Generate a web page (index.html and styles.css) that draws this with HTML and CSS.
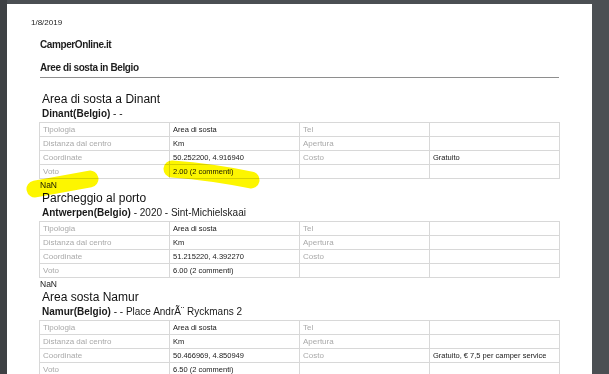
FILE: index.html
```html
<!DOCTYPE html>
<html lang="it">
<head>
<meta charset="utf-8">
<title>Aree di sosta in Belgio</title>
<link rel="stylesheet" href="styles.css">
</head>
<body>
<div class="page">
  <div class="date">1/8/2019</div>
  <div class="site">CamperOnline.it</div>
  <div class="heading">Aree di sosta in Belgio</div>

  <section class="area">
    <h2 class="area-title">Area di sosta a Dinant</h2>
    <div class="area-sub"><b>Dinant(Belgio)</b> - -</div>
    <table class="info">
      <tr><td class="lbl">Tipologia</td><td class="val">Area di sosta</td><td class="lbl">Tel</td><td class="val"></td></tr>
      <tr><td class="lbl">Distanza dal centro</td><td class="val">Km</td><td class="lbl">Apertura</td><td class="val"></td></tr>
      <tr><td class="lbl">Coordinate</td><td class="val">50.252200, 4.916940</td><td class="lbl">Costo</td><td class="val">Gratuito</td></tr>
      <tr><td class="lbl">Voto</td><td class="val">2.00 (2 commenti)</td><td class="lbl"></td><td class="val"></td></tr>
    </table>
    <div class="nan">NaN</div>
  </section>

  <section class="area">
    <h2 class="area-title">Parcheggio al porto</h2>
    <div class="area-sub"><b>Antwerpen(Belgio)</b> - 2020 - Sint-Michielskaai</div>
    <table class="info">
      <tr><td class="lbl">Tipologia</td><td class="val">Area di sosta</td><td class="lbl">Tel</td><td class="val"></td></tr>
      <tr><td class="lbl">Distanza dal centro</td><td class="val">Km</td><td class="lbl">Apertura</td><td class="val"></td></tr>
      <tr><td class="lbl">Coordinate</td><td class="val">51.215220, 4.392270</td><td class="lbl">Costo</td><td class="val"></td></tr>
      <tr><td class="lbl">Voto</td><td class="val">6.00 (2 commenti)</td><td class="lbl"></td><td class="val"></td></tr>
    </table>
    <div class="nan">NaN</div>
  </section>

  <section class="area">
    <h2 class="area-title">Area sosta Namur</h2>
    <div class="area-sub"><b>Namur(Belgio)</b> - - Place AndrÃ¨ Ryckmans 2</div>
    <table class="info">
      <tr><td class="lbl">Tipologia</td><td class="val">Area di sosta</td><td class="lbl">Tel</td><td class="val"></td></tr>
      <tr><td class="lbl">Distanza dal centro</td><td class="val">Km</td><td class="lbl">Apertura</td><td class="val"></td></tr>
      <tr><td class="lbl">Coordinate</td><td class="val">50.466969, 4.850949</td><td class="lbl">Costo</td><td class="val">Gratuito, € 7,5 per camper service</td></tr>
      <tr><td class="lbl">Voto</td><td class="val">6.50 (2 commenti)</td><td class="lbl"></td><td class="val"></td></tr>
    </table>
    <div class="nan">NaN</div>
  </section>
</div>

<svg class="marker" width="609" height="374" viewBox="0 0 609 374" aria-hidden="true">
  <path d="M35 189 Q 62 184 90 179" />
  <path d="M172 169 Q 212 172 251 180" />
</svg>
</body>
</html>
```

FILE: styles.css
```css
html, body {
  margin: 0;
  padding: 0;
  height: 100%;
  overflow: hidden;
}

body {
  background: linear-gradient(to right, #3e4144 0, #3e4144 7px, #4b4f53 7px);
  font-family: "Liberation Sans", Arial, sans-serif;
  color: #1e1e1e;
  position: relative;
}

.page {
  margin: 4px 17px 0 7px;
  min-height: 370px;
  background: #ffffff;
  box-sizing: border-box;
  padding: 14px 0 0 33px;
}

.date {
  margin-left: -9px;
  font-size: 8px;
  line-height: 10px;
  color: #222;
}

.site {
  margin-top: 10px;
  font-size: 10px;
  line-height: 13px;
  font-weight: bold;
  letter-spacing: -0.4px;
}

.heading {
  margin-top: 10px;
  width: 519px;
  font-size: 10px;
  line-height: 13px;
  font-weight: bold;
  letter-spacing: -0.4px;
  padding-bottom: 3px;
  border-bottom: 1px solid #8e8e8e;
}

.area:first-of-type {
  margin-top: 14px;
}

.area-title {
  margin: 0;
  padding-left: 2px;
  font-size: 12px;
  line-height: 15px;
  font-weight: normal;
  color: #111;
}

.area-sub {
  padding-left: 2px;
  font-size: 10px;
  line-height: 13px;
  color: #1a1a1a;
}

.area-sub b {
  font-weight: bold;
}

.info {
  margin: 2px 0 0 -1px;
  width: 521px;
  table-layout: fixed;
  border-collapse: collapse;
}

.info td {
  border: 1px solid #d8d8d8;
  padding: 0 3px;
  line-height: 13px;
  white-space: nowrap;
  overflow: hidden;
}

.info .lbl {
  font-size: 8px;
  color: #a9a9a9;
}

.info .val {
  font-size: 7.5px;
  color: #202020;
}

.nan {
  font-size: 8.5px;
  line-height: 12px;
  color: #1a1a1a;
}

.marker {
  position: absolute;
  left: 0;
  top: 0;
  pointer-events: none;
  mix-blend-mode: multiply;
}

.marker path {
  fill: none;
  stroke: #fdf600;
  stroke-width: 17;
  stroke-linecap: round;
  stroke-linejoin: round;
}
```
